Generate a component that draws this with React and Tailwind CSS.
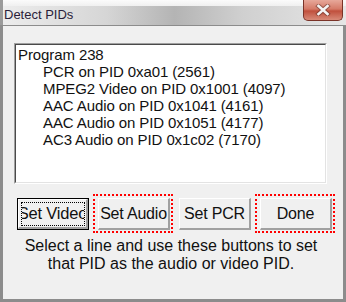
import React from "react";

const lines = [
  { t: "Program 238", indent: false },
  { t: "PCR on PID 0xa01 (2561)", indent: true },
  { t: "MPEG2 Video on PID 0x1001 (4097)", indent: true },
  { t: "AAC Audio on PID 0x1041 (4161)", indent: true },
  { t: "AAC Audio on PID 0x1051 (4177)", indent: true },
  { t: "AC3 Audio on PID 0x1c02 (7170)", indent: true },
];

function Btn({ children, focused, marked }) {
  return (
    <div className="relative">
      <div
        className={
          "w-[72px] h-[32px] flex items-center justify-center overflow-hidden " +
          (focused ? "border border-black" : "")
        }
      >
        <div className="w-full h-full bg-[#f0f0f0] border-t border-l border-t-white border-l-white border-r-2 border-b-2 border-r-[#a0a0a0] border-b-[#a0a0a0] flex items-center justify-center overflow-hidden">
          <div
            className={
              "flex items-center justify-center whitespace-nowrap leading-none text-[#111] " +
              (focused
                ? "w-[64px] h-[24px] border border-dotted border-black text-[16.5px] tracking-[-0.2px] overflow-hidden"
                : "text-[16px] tracking-[-0.2px]")
            }
          >
            {children}
          </div>
        </div>
      </div>
      {marked && (
        <div className="absolute -left-[5px] -top-[4px] -right-[3px] -bottom-[3px] border-2 border-dotted border-[#ff0000] pointer-events-none" />
      )}
    </div>
  );
}

export default function App() {
  return (
    <div
      className="w-[346px] h-[302px] flex flex-col bg-white overflow-hidden relative"
      style={{ fontFamily: '"Liberation Sans", Arial, sans-serif' }}
    >
      {/* title bar */}
      <div className="h-[25px] shrink-0 bg-[linear-gradient(90deg,#ececec_0%,#d6d6d6_30%,#b4b4b4_50%,#d0d0d0_70%,#e6e6e6_100%)] border-l-[3px] border-[#9a9a9a] flex items-center relative">
        <div className="absolute inset-x-0 top-0 h-[6px] bg-[linear-gradient(180deg,#fbfbfb,#f0f0f0)]" />
        <span className="relative pl-[1px] pt-[4px] text-[13px] text-[#2a1e3a]">Detect PIDs</span>
        <div className="absolute right-[3px] top-0 w-[40px] h-[21px] rounded-b-[5px] border border-t-0 border-[#7a3328] bg-[linear-gradient(180deg,#e7a89a_0%,#d57a68_45%,#c0503d_55%,#d88a78_100%)] flex items-center justify-center">
          <svg width="16" height="12" viewBox="0 0 16 12">
            <path
              d="M3.5 2 L12.5 10 M12.5 2 L3.5 10"
              stroke="#5a2a22"
              strokeWidth="4.5"
              strokeLinecap="square"
              opacity="0.5"
            />
            <path
              d="M3.5 2 L12.5 10 M12.5 2 L3.5 10"
              stroke="#f4f4f4"
              strokeWidth="2.6"
              strokeLinecap="square"
            />
          </svg>
        </div>
      </div>
      {/* client */}
      <div className="flex-1 flex flex-col bg-[#f0f0f0] border-l-[3px] border-r-[3px] border-b-[3px] border-[#8c8c8c] border-t border-t-[#8c8c8c]">
        <div className="ml-[11px] mt-[17px] w-[313px] h-[141px] border border-t-[#a0a0a0] border-l-[#a0a0a0] border-r-white border-b-white">
          <div className="w-full h-full bg-white border border-t-[#4a4a4a] border-l-[#4a4a4a] border-r-[#e3e3e3] border-b-[#e3e3e3] pt-[1px] pl-[2px]">
            {lines.map((l, i) => (
              <div
                key={i}
                className={
                  "text-[15px] leading-[17px] text-[#111] whitespace-nowrap tracking-[-0.1px] " +
                  (l.indent ? "pl-[25px]" : "")
                }
              >
                {l.t}
              </div>
            ))}
          </div>
        </div>
        <div className="flex gap-[9px] ml-[14px] mt-[14px]">
          <Btn focused>Set Video</Btn>
          <Btn marked>Set Audio</Btn>
          <Btn>Set PCR</Btn>
          <Btn marked>Done</Btn>
        </div>
        <div className="mt-[7px] text-center text-[16px] leading-[18px] text-[#111] pr-[4px]">
          <div>Select a line and use these buttons to set</div>
          <div>that PID as the audio or video PID.</div>
        </div>
      </div>
    </div>
  );
}
